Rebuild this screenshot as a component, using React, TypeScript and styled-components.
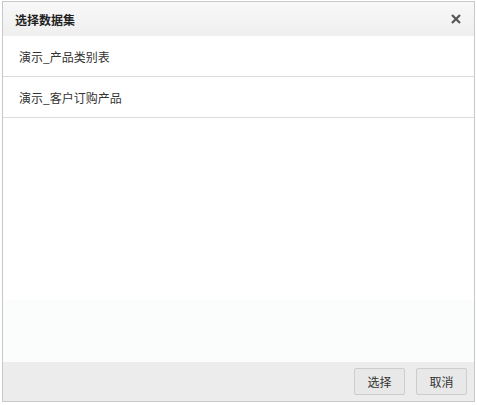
import React from "react";
import styled, { createGlobalStyle } from "styled-components";

const GlobalStyle = createGlobalStyle`
  html, body {
    margin: 0;
    padding: 0;
    background: #ffffff;
    font-family: "Noto Sans CJK SC", "Noto Sans", "Liberation Sans", sans-serif;
  }
`;

const datasets = ["演示_产品类别表", "演示_客户订购产品"];

const Page = styled.div`
  padding: 1px 0 0 2px;
`;

const Dialog = styled.div`
  width: 471px;
  height: 399px;
  border: 1px solid #c8c8c8;
  display: flex;
  flex-direction: column;
  background: #ffffff;
`;

const Header = styled.div`
  height: 34px;
  flex: none;
  display: flex;
  align-items: center;
  justify-content: space-between;
  padding: 0 12px 0 12px;
  background: linear-gradient(#f8f8f8, #efefef);
`;

const Title = styled.span`
  font-size: 12px;
  font-weight: bold;
  color: #222;
`;

const Close = styled.span`
  display: flex;
  width: 12px;
  height: 12px;
`;

const Body = styled.div`
  flex: 1;
  background: linear-gradient(#ffffff 0, #ffffff 264px, #fbfcfc 264px);
`;

const Row = styled.div`
  height: 41px;
  padding-left: 16px;
  display: flex;
  align-items: center;
  font-size: 12px;
  color: #333;
  border-bottom: 1px solid #dcdcdc;
  box-sizing: border-box;
`;

const Footer = styled.div`
  height: 39px;
  flex: none;
  display: flex;
  align-items: center;
  justify-content: flex-end;
  gap: 11px;
  padding-right: 7px;
  background: #ececec;
`;

const Button = styled.button`
  width: 51px;
  height: 27px;
  border: 1px solid #cdcdcd;
  border-radius: 2px;
  background: #e8e8e8;
  color: #333;
  font-size: 12px;
  font-family: inherit;
  padding: 0;
`;

export default function App() {
  return (
    <>
      <GlobalStyle />
      <Page>
        <Dialog>
          <Header>
            <Title>选择数据集</Title>
            <Close>
              <svg width="12" height="12" viewBox="0 0 12 12">
                <path d="M2 2 L10 10 M10 2 L2 10" stroke="#555" strokeWidth="2.2" />
              </svg>
            </Close>
          </Header>
          <Body>
            {datasets.map((name) => (
              <Row key={name}>{name}</Row>
            ))}
          </Body>
          <Footer>
            <Button>选择</Button>
            <Button>取消</Button>
          </Footer>
        </Dialog>
      </Page>
    </>
  );
}
